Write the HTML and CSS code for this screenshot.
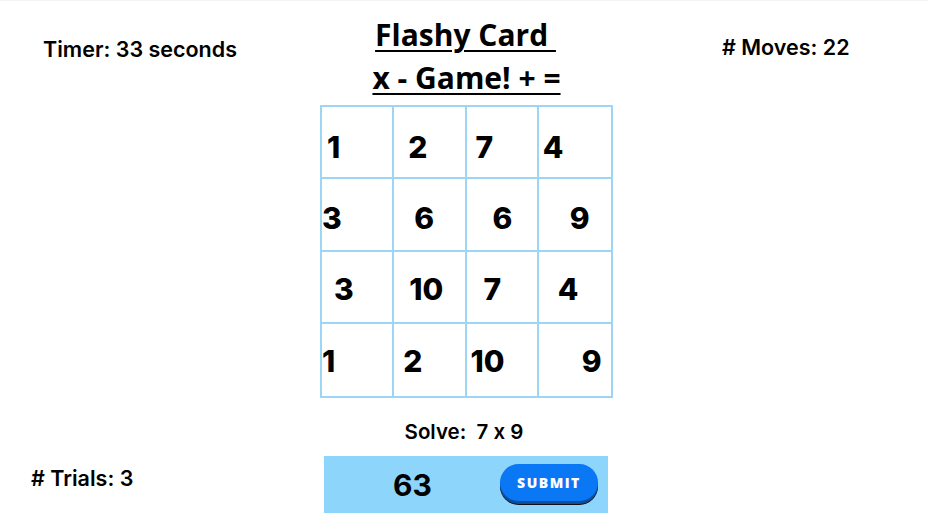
FILE: index.html
```html
<!DOCTYPE html>
<html>
<head>
<meta charset="utf-8">
<link rel="stylesheet" href="styles.css">
</head>
<body>
<div class="page">
  <div class="top">
    <div class="stat timer">Timer: 33 seconds</div>
    <h1 class="title"><span>Flashy Card&nbsp;</span><span>x - Game! + =</span></h1>
    <div class="stat moves"># Moves: 22</div>
  </div>
  <div class="board">
    <div class="cell r1" style="--x:5px">1</div>
    <div class="cell r1" style="--x:14px">2</div>
    <div class="cell r1" style="--x:9px">7</div>
    <div class="cell r1" style="--x:4px">4</div>
    <div class="cell r2" style="--x:0px">3</div>
    <div class="cell r2" style="--x:20px">6</div>
    <div class="cell r2" style="--x:26px">6</div>
    <div class="cell r2" style="--x:31px">9</div>
    <div class="cell r3" style="--x:12px">3</div>
    <div class="cell r3" style="--x:15px">10</div>
    <div class="cell r3" style="--x:17px">7</div>
    <div class="cell r3" style="--x:19px">4</div>
    <div class="cell r4" style="--x:0px">1</div>
    <div class="cell r4" style="--x:9px">2</div>
    <div class="cell r4" style="--x:4px">10</div>
    <div class="cell r4" style="--x:43px">9</div>
  </div>
  <div class="bottom">
    <div class="stat trials"># Trials: 3</div>
    <div class="solve">
      <div class="question">Solve:&nbsp; 7 x 9</div>
      <div class="answer">
        <span class="value">63</span>
        <button class="submit">SUBMIT</button>
      </div>
    </div>
  </div>
</div>
</body>
</html>
```

FILE: styles.css
```css
* { box-sizing: border-box; }
html, body { margin: 0; padding: 0; background: #fff; }
body {
  font-family: Inter, "Noto Sans", sans-serif;
  font-feature-settings: "calt" 0;
  color: #000;
  width: 928px;
  height: 527px;
  overflow: hidden;
}
.page {
  width: 928px;
  height: 527px;
  border-top: 1px solid #f4f4f4;
}
.top {
  display: grid;
  grid-template-columns: 320px 293px 1fr;
  align-items: start;
  height: 104px;
}
.stat {
  font-weight: 600;
  font-size: 21.5px;
  white-space: nowrap;
}
.timer { padding: 35px 0 0 43px; }
.moves { padding: 33px 0 0 109px; }
.title {
  margin: 0;
  padding-top: 12px;
  display: flex;
  flex-direction: column;
  align-items: center;
  font-family: "Open Sans", sans-serif;
  font-weight: 700;
  font-size: 30px;
  line-height: 43px;
  white-space: nowrap;
  text-decoration: underline;
  text-decoration-thickness: 2px;
  text-underline-offset: 4px;
}
.title span:first-child { margin-left: -2px; }
.board {
  margin: 0 0 0 320px;
  width: 293px;
  height: 293px;
  display: grid;
  grid-template-columns: repeat(4, 1fr);
  grid-template-rows: repeat(4, 1fr);
  border: 2px solid #9dd6f5;
}
.cell {
  border-right: 2px solid #9dd6f5;
  border-bottom: 2px solid #9dd6f5;
  display: flex;
  align-items: center;
  padding-left: var(--x);
  font-family: Inter, sans-serif;
  font-weight: 800;
  font-size: 30px;
}
.cell.r1 { padding-top: 10px; }
.cell.r2 { padding-top: 8px; }
.cell.r3 { padding-top: 4px; }
.cell.r4 { padding-top: 2px; }
.cell:nth-child(4n) { border-right: none; }
.cell:nth-child(n+13) { border-bottom: none; }
.bottom {
  display: flex;
  align-items: flex-start;
}
.trials { padding: 67px 0 0 31px; width: 324px; }
.solve {
  display: flex;
  flex-direction: column;
  align-items: center;
  width: 284px;
}
.question {
  font-weight: 600;
  font-size: 20.5px;
  margin-top: 21px;
  height: 37px;
  margin-left: -4px;
}
.answer {
  width: 284px;
  height: 57px;
  background: #8ed5fb;
  display: flex;
  align-items: center;
  padding-left: 69px;
}
.value {
  font-family: Inter, sans-serif;
  font-weight: 700;
  font-size: 30px;
  width: 107px;
}
.submit {
  width: 98px;
  height: 37px;
  border-radius: 19px;
  border: none;
  background: #0a78f5;
  color: #fff;
  font-family: "Open Sans", sans-serif;
  font-weight: 800;
  font-size: 14px;
  letter-spacing: 1.5px;
  box-shadow: 0 3px 0 #0a4fa3, 0 4px 0 #111;
  margin-bottom: 4px;
}
```
